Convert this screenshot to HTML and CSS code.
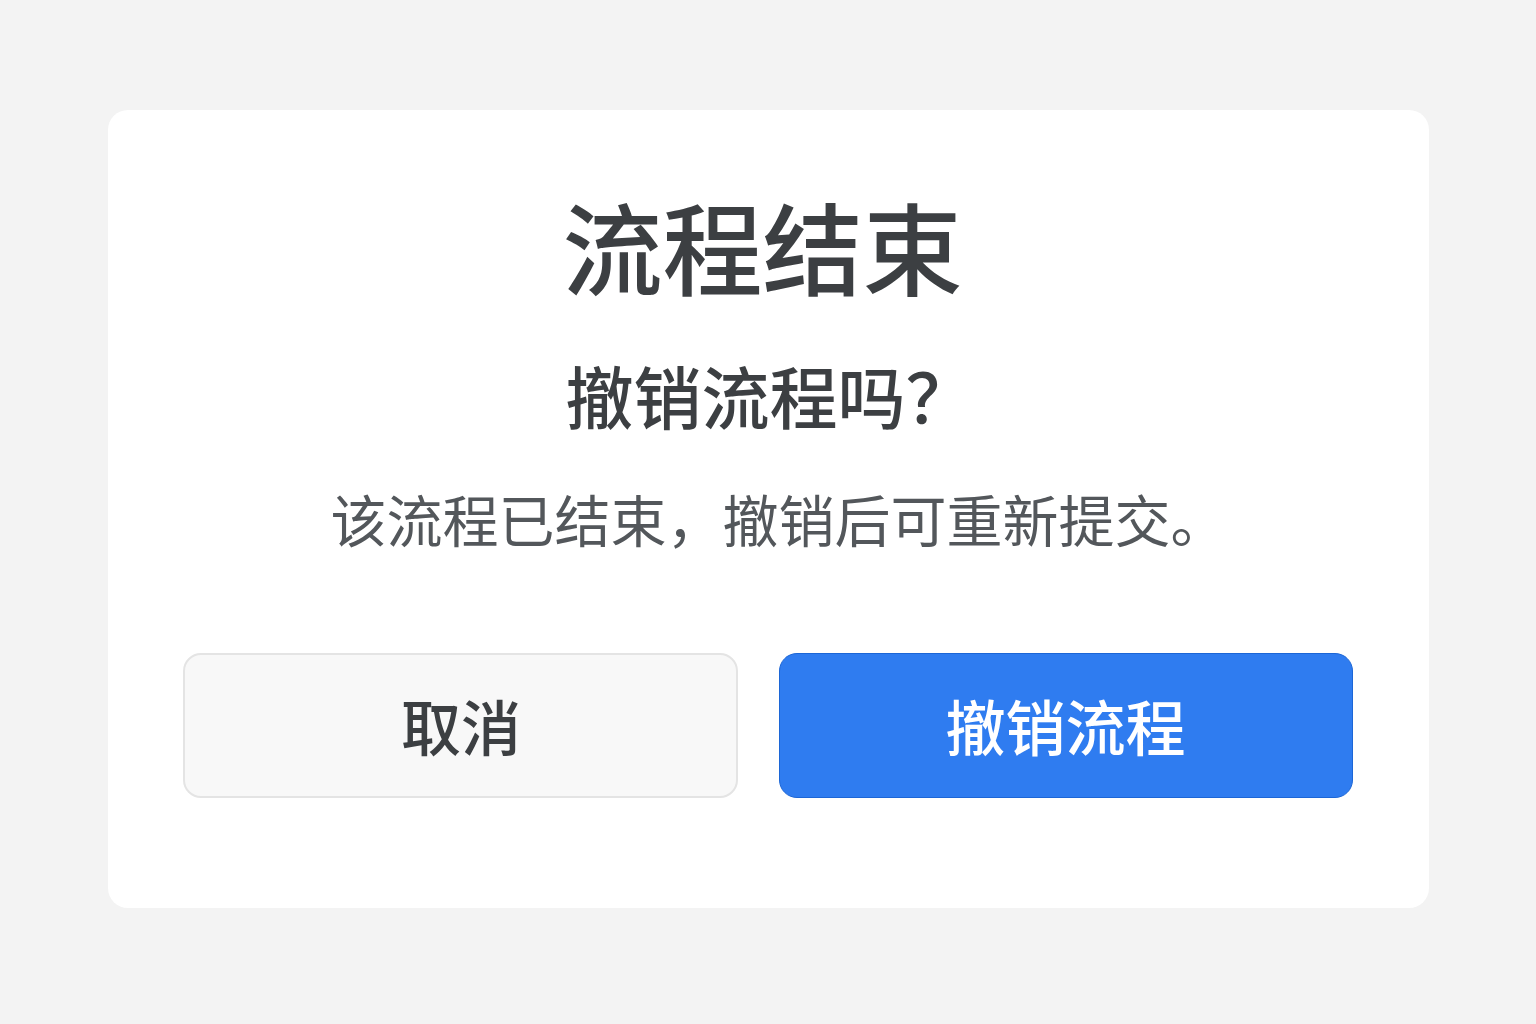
FILE: index.html
```html
<!DOCTYPE html>
<html lang="zh-CN">
<head>
    <meta charset="UTF-8">
    <meta name="viewport" content="width=device-width, initial-scale=1.0">
    <title>流程结束</title>
    <link rel="stylesheet" href="styles.css">
</head>
<body>
    <div class="dialog">
        <h1 class="dialog-title">流程结束</h1>
        <h2 class="dialog-question">撤销流程吗？</h2>
        <p class="dialog-text">该流程已结束，撤销后可重新提交。</p>
        <div class="dialog-actions">
            <button class="btn btn-cancel">取消</button>
            <button class="btn btn-primary">撤销流程</button>
        </div>
    </div>
</body>
</html>
```

FILE: styles.css
```css
body {
    margin: 0;
    padding: 0;
    background: #f3f3f3;
    font-family: "Noto Sans CJK SC", "Noto Sans", sans-serif;
}

.dialog {
    width: 1321px;
    margin: 110px auto 0;
    padding: 75px 76px 110px 75px;
    box-sizing: border-box;
    background: #ffffff;
    border-radius: 20px;
    text-align: center;
}

.dialog-title {
    margin: 0 10px 0 0;
    font-size: 100px;
    line-height: 120px;
    font-weight: 500;
    color: #3c3f42;
}

.dialog-question {
    margin: 49px 0 0;
    padding-left: 4px;
    font-size: 68px;
    line-height: 82px;
    font-weight: 500;
    color: #3c3f42;
}

.dialog-text {
    margin: 46px 0 0;
    padding-left: 22px;
    font-size: 56px;
    line-height: 72px;
    font-weight: 400;
    color: #53575b;
}

.dialog-actions {
    display: flex;
    gap: 41px;
    margin-top: 99px;
}

.btn {
    height: 145px;
    padding-bottom: 3px;
    font-family: inherit;
    font-size: 60px;
    font-weight: 500;
    border-radius: 18px;
    cursor: pointer;
    box-sizing: border-box;
}

.btn-cancel {
    width: 555px;
    padding-left: 8px;
    background: #f8f8f8;
    border: 2px solid #e4e4e4;
    color: #3c3f42;
}

.btn-primary {
    width: 574px;
    background: #2f7cf0;
    border: 1px solid #1c66d6;
    color: #ffffff;
}

.btn:focus {
    outline: none;
}
```
